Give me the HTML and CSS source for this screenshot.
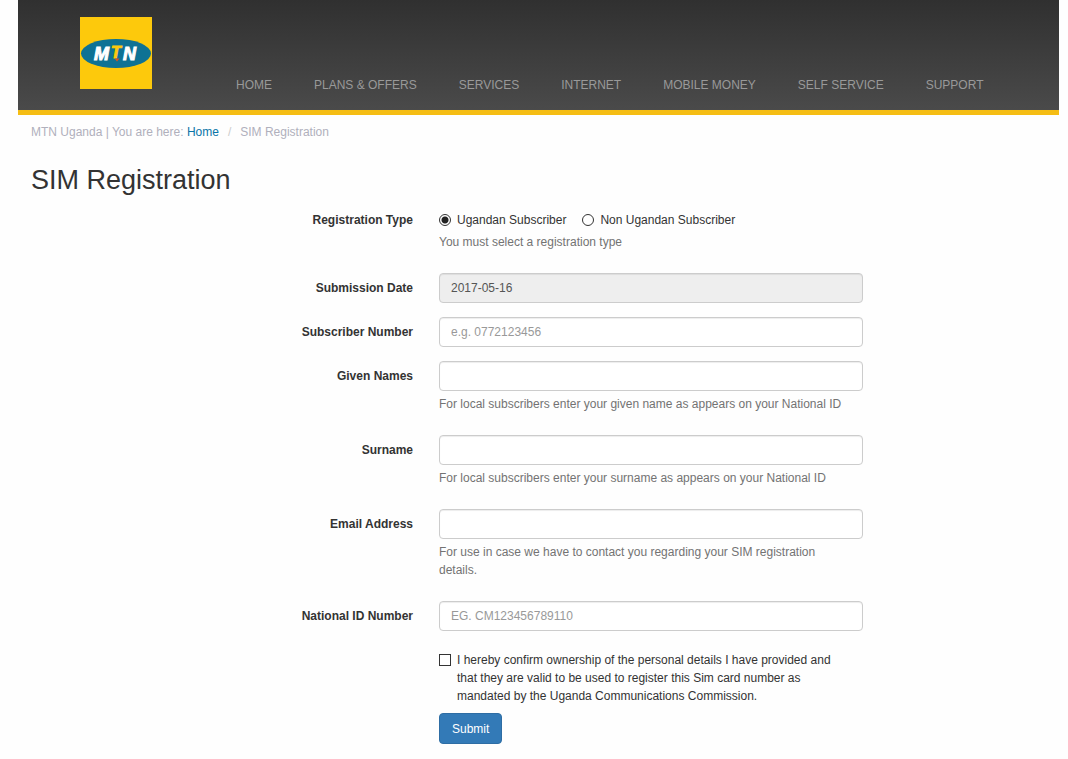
FILE: index.html
```
<!DOCTYPE html>
<html lang="en">
<head>
    <meta charset="UTF-8">
    <meta name="viewport" content="width=device-width, initial-scale=1.0">
    <title>SIM Registration | MTN Uganda</title>
    <link rel="stylesheet" href="styles.css">
</head>
<body>
    <header class="header">
        <a class="logo" href="#" aria-label="MTN">
            <svg width="72" height="72" viewBox="0 0 72 72">
                <rect width="72" height="72" fill="#fdc90c"/>
                <ellipse cx="36" cy="36.5" rx="35" ry="14.5" fill="#0e7294"/>
                <g class="logo-text">
                    <text x="14" y="43" fill="#fff" stroke="#fff">M</text>
                    <text class="logo-t" x="31" y="41" fill="#fdc90c" stroke="#fdc90c">T</text>
                    <text x="43" y="43" fill="#fff" stroke="#fff">N</text>
                </g>
                <path d="M34.5 41.5h5l-2.5 3z" fill="#d9531e"/>
            </svg>
        </a>
        <nav class="nav">
            <a href="#">HOME</a>
            <a href="#">PLANS &amp; OFFERS</a>
            <a href="#">SERVICES</a>
            <a href="#">INTERNET</a>
            <a href="#">MOBILE MONEY</a>
            <a href="#">SELF SERVICE</a>
            <a href="#">SUPPORT</a>
        </nav>
    </header>

    <main class="content">
        <div class="breadcrumb">
            MTN Uganda | You are here: <a href="#">Home</a><span class="separator">/</span>SIM Registration
        </div>
        <h1>SIM Registration</h1>

        <form>
            <div class="form-group" role="radiogroup" aria-labelledby="typeLabel">
                <span class="control-label" id="typeLabel">Registration Type</span>
                <div class="field">
                    <div class="radios">
                        <label><input type="radio" name="type" value="local" checked>Ugandan Subscriber</label>
                        <label><input type="radio" name="type" value="foreign">Non Ugandan Subscriber</label>
                    </div>
                    <p class="help-block">You must select a registration type</p>
                </div>
            </div>
            <div class="form-group">
                <label class="control-label" for="date">Submission Date</label>
                <div class="field">
                    <input type="text" class="form-control" id="date" value="2017-05-16" readonly>
                </div>
            </div>
            <div class="form-group">
                <label class="control-label" for="number">Subscriber Number</label>
                <div class="field">
                    <input type="text" class="form-control" id="number" placeholder="e.g. 0772123456">
                </div>
            </div>
            <div class="form-group">
                <label class="control-label" for="givenNames">Given Names</label>
                <div class="field">
                    <input type="text" class="form-control" id="givenNames">
                    <p class="help-block">For local subscribers enter your given name as appears on your National ID</p>
                </div>
            </div>
            <div class="form-group">
                <label class="control-label" for="surname">Surname</label>
                <div class="field">
                    <input type="text" class="form-control" id="surname">
                    <p class="help-block">For local subscribers enter your surname as appears on your National ID</p>
                </div>
            </div>
            <div class="form-group">
                <label class="control-label" for="email">Email Address</label>
                <div class="field">
                    <input type="email" class="form-control" id="email">
                    <p class="help-block">For use in case we have to contact you regarding your SIM registration details.</p>
                </div>
            </div>
            <div class="form-group">
                <label class="control-label" for="nationalId">National ID Number</label>
                <div class="field">
                    <input type="text" class="form-control" id="nationalId" placeholder="EG. CM123456789110">
                </div>
            </div>
            <div class="form-group">
                <div class="field">
                    <label class="confirm">
                        <input type="checkbox" name="confirm">
                        <span>I hereby confirm ownership of the personal details I have provided and that they are valid to be used to register this Sim card number as mandated by the Uganda Communications Commission.</span>
                    </label>
                    <button type="submit" class="btn">Submit</button>
                </div>
            </div>
        </form>
    </main>
</body>
</html>
```
FILE: styles.css
```
* {
    box-sizing: border-box;
}
body {
    margin: 0 9px 0 18px;
    background: #fefefe;
    color: #333;
    font-family: "Liberation Sans", Arial, sans-serif;
    font-size: 12px;
    line-height: 18px;
}
.header {
    display: flex;
    align-items: flex-end;
    gap: 84px;
    padding: 17px 13px 16px 62px;
    background: linear-gradient(#303030, #4a4a4a);
    border-bottom: 5px solid #f5bd14;
}
.logo {
    margin-bottom: 5px;
}
.logo svg {
    display: block;
}
.logo-text {
    font-size: 18px;
    font-weight: bold;
    font-style: italic;
    stroke-width: 1;
}
.logo-t {
    font-size: 16px;
}
.nav {
    display: flex;
    gap: 42px;
    white-space: nowrap;
}
.nav a {
    color: #999;
    text-decoration: none;
}
.content {
    padding: 8px 13px 0;
}
.breadcrumb {
    color: #b0b0bc;
}
.breadcrumb a {
    color: #0a75a8;
    text-decoration: none;
}
.separator {
    padding: 0 9px;
    color: #ccc;
}
h1 {
    margin: 24px 0 10px;
    font-size: 27px;
    font-weight: normal;
    line-height: 30px;
}
.form-group {
    display: grid;
    grid-template-columns: minmax(0, 382fr) minmax(0, 424fr) minmax(0, 157fr);
    column-gap: 26px;
    margin-bottom: 14px;
}
.control-label {
    padding-top: 6px;
    font-weight: bold;
    text-align: right;
}
.field {
    grid-column: 2;
}
.form-control {
    display: block;
    width: 100%;
    height: 30px;
    padding: 5px 11px;
    border: 1px solid #ccc;
    border-radius: 4px;
    background: #fff;
    box-shadow: inset 0 1px 1px rgba(0,0,0,0.075);
    color: #555;
    font: inherit;
}
.form-control[readonly] {
    background: #eee;
}
.form-control::placeholder {
    color: #999;
}
.help-block {
    margin: 4px 0 8px;
    padding-right: 16px;
    color: #737373;
}
.radios {
    display: flex;
    gap: 16px;
    padding-top: 6px;
}
.radios label, .confirm {
    display: flex;
    align-items: flex-start;
    gap: 6px;
}
input[type="radio"], input[type="checkbox"] {
    appearance: none;
    flex: none;
    width: 12px;
    height: 12px;
    margin: 3px 0 0;
    border: 1px solid #333;
    background: #fff;
}
input[type="radio"] {
    border-radius: 50%;
}
input[type="radio"]:checked {
    background: radial-gradient(circle, #222 3px, #fff 4px);
}
input[type="checkbox"]:checked {
    background: #337ab7;
}
.confirm {
    padding: 6px 16px 0 0;
    margin-bottom: 8px;
}
.btn {
    height: 31px;
    padding: 0 12px;
    border: 1px solid #2e6da4;
    border-radius: 4px;
    background: #337ab7;
    color: #fff;
    font: inherit;
    cursor: pointer;
}
.btn:hover {
    background: #286090;
}
```
